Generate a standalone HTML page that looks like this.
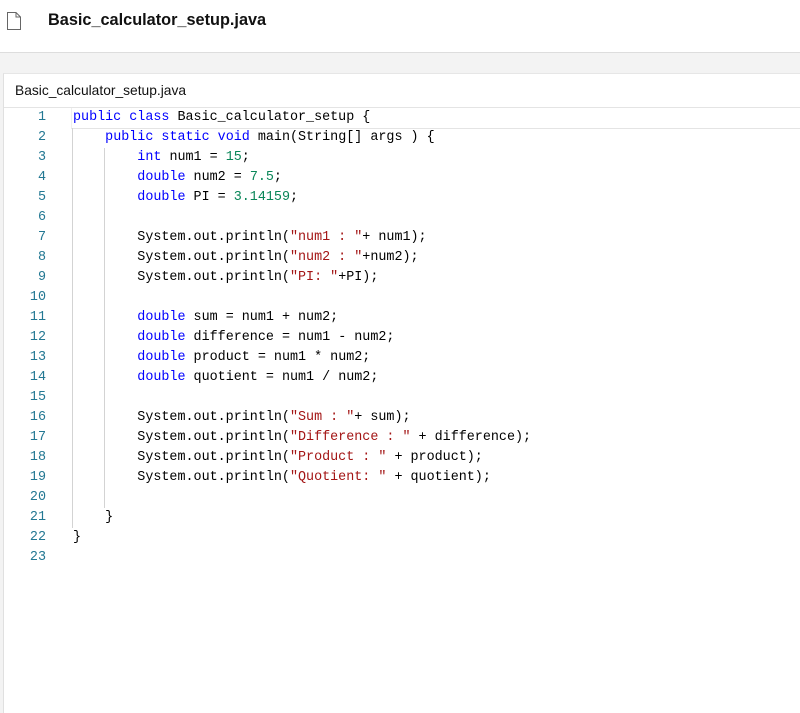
<!DOCTYPE html>
<html><head><style>
body{margin:0;width:800px;height:712px;background:#f3f3f3;overflow:hidden;font-family:"Liberation Sans",sans-serif;position:relative}
.hdr{position:absolute;left:0;top:0;width:800px;height:52px;background:#fff;border-bottom:1px solid #ddd}
.hdr .t{position:absolute;left:48px;top:11px;font-size:16.3px;font-weight:bold;color:#111}
.panel{position:absolute;left:3px;top:73px;width:797px;height:639px;background:#fff;border-left:1px solid #e0e0e0;border-top:1px solid #e6e6e6}
.ptitle{position:absolute;left:11px;top:9px;font-size:13.8px;color:#111}
.code{position:absolute;left:0;top:33px;width:797px;border-top:1px solid #e4e4e4}
.cur{position:absolute;left:67px;top:0;width:730px;height:18px;border-bottom:1px solid #e4e4e4;border-left:1px solid #eee}
.ln{position:absolute;left:0;width:42px;text-align:right;color:#237893}
.l{position:absolute;left:69px;white-space:pre;color:#000}
.code div{font-family:"Liberation Mono",monospace;font-size:13.4px;line-height:20px;height:20px}
.k{color:#0000ff}.n{color:#098658}.s{color:#a31515}
.code .g{position:absolute;width:1px;background:#d3d3d3}
</style></head><body>
<div class="hdr">
<svg style="position:absolute;left:6px;top:11px" width="16" height="20" viewBox="0 0 16 20"><path d="M1.5 1.5H10L14.5 6V18.5H1.5Z M10 1.5V6H14.5" fill="none" stroke="#666" stroke-width="1"/></svg>
<div class="t">Basic_calculator_setup.java</div></div>
<div class="panel">
<div class="ptitle">Basic_calculator_setup.java</div>
<div class="code">
<div class="cur"></div>
<div class="g" style="left:68px;top:20px;height:400px"></div>
<div class="g" style="left:100px;top:40px;height:360px"></div>
<div class="ln" style="top:0">1</div><div class="l" style="top:0"><span class="k">public class</span> Basic_calculator_setup {</div>
<div class="ln" style="top:20px">2</div><div class="l" style="top:20px">    <span class="k">public static void</span> main(String[] args ) {</div>
<div class="ln" style="top:40px">3</div><div class="l" style="top:40px">        <span class="k">int</span> num1 = <span class="n">15</span>;</div>
<div class="ln" style="top:60px">4</div><div class="l" style="top:60px">        <span class="k">double</span> num2 = <span class="n">7.5</span>;</div>
<div class="ln" style="top:80px">5</div><div class="l" style="top:80px">        <span class="k">double</span> PI = <span class="n">3.14159</span>;</div>
<div class="ln" style="top:100px">6</div>
<div class="ln" style="top:120px">7</div><div class="l" style="top:120px">        System.out.println(<span class="s">"num1 : "</span>+ num1);</div>
<div class="ln" style="top:140px">8</div><div class="l" style="top:140px">        System.out.println(<span class="s">"num2 : "</span>+num2);</div>
<div class="ln" style="top:160px">9</div><div class="l" style="top:160px">        System.out.println(<span class="s">"PI: "</span>+PI);</div>
<div class="ln" style="top:180px">10</div>
<div class="ln" style="top:200px">11</div><div class="l" style="top:200px">        <span class="k">double</span> sum = num1 + num2;</div>
<div class="ln" style="top:220px">12</div><div class="l" style="top:220px">        <span class="k">double</span> difference = num1 - num2;</div>
<div class="ln" style="top:240px">13</div><div class="l" style="top:240px">        <span class="k">double</span> product = num1 * num2;</div>
<div class="ln" style="top:260px">14</div><div class="l" style="top:260px">        <span class="k">double</span> quotient = num1 / num2;</div>
<div class="ln" style="top:280px">15</div>
<div class="ln" style="top:300px">16</div><div class="l" style="top:300px">        System.out.println(<span class="s">"Sum : "</span>+ sum);</div>
<div class="ln" style="top:320px">17</div><div class="l" style="top:320px">        System.out.println(<span class="s">"Difference : "</span> + difference);</div>
<div class="ln" style="top:340px">18</div><div class="l" style="top:340px">        System.out.println(<span class="s">"Product : "</span> + product);</div>
<div class="ln" style="top:360px">19</div><div class="l" style="top:360px">        System.out.println(<span class="s">"Quotient: "</span> + quotient);</div>
<div class="ln" style="top:380px">20</div>
<div class="ln" style="top:400px">21</div><div class="l" style="top:400px">    }</div>
<div class="ln" style="top:420px">22</div><div class="l" style="top:420px">}</div>
<div class="ln" style="top:440px">23</div>
</div></div>
</body></html>
